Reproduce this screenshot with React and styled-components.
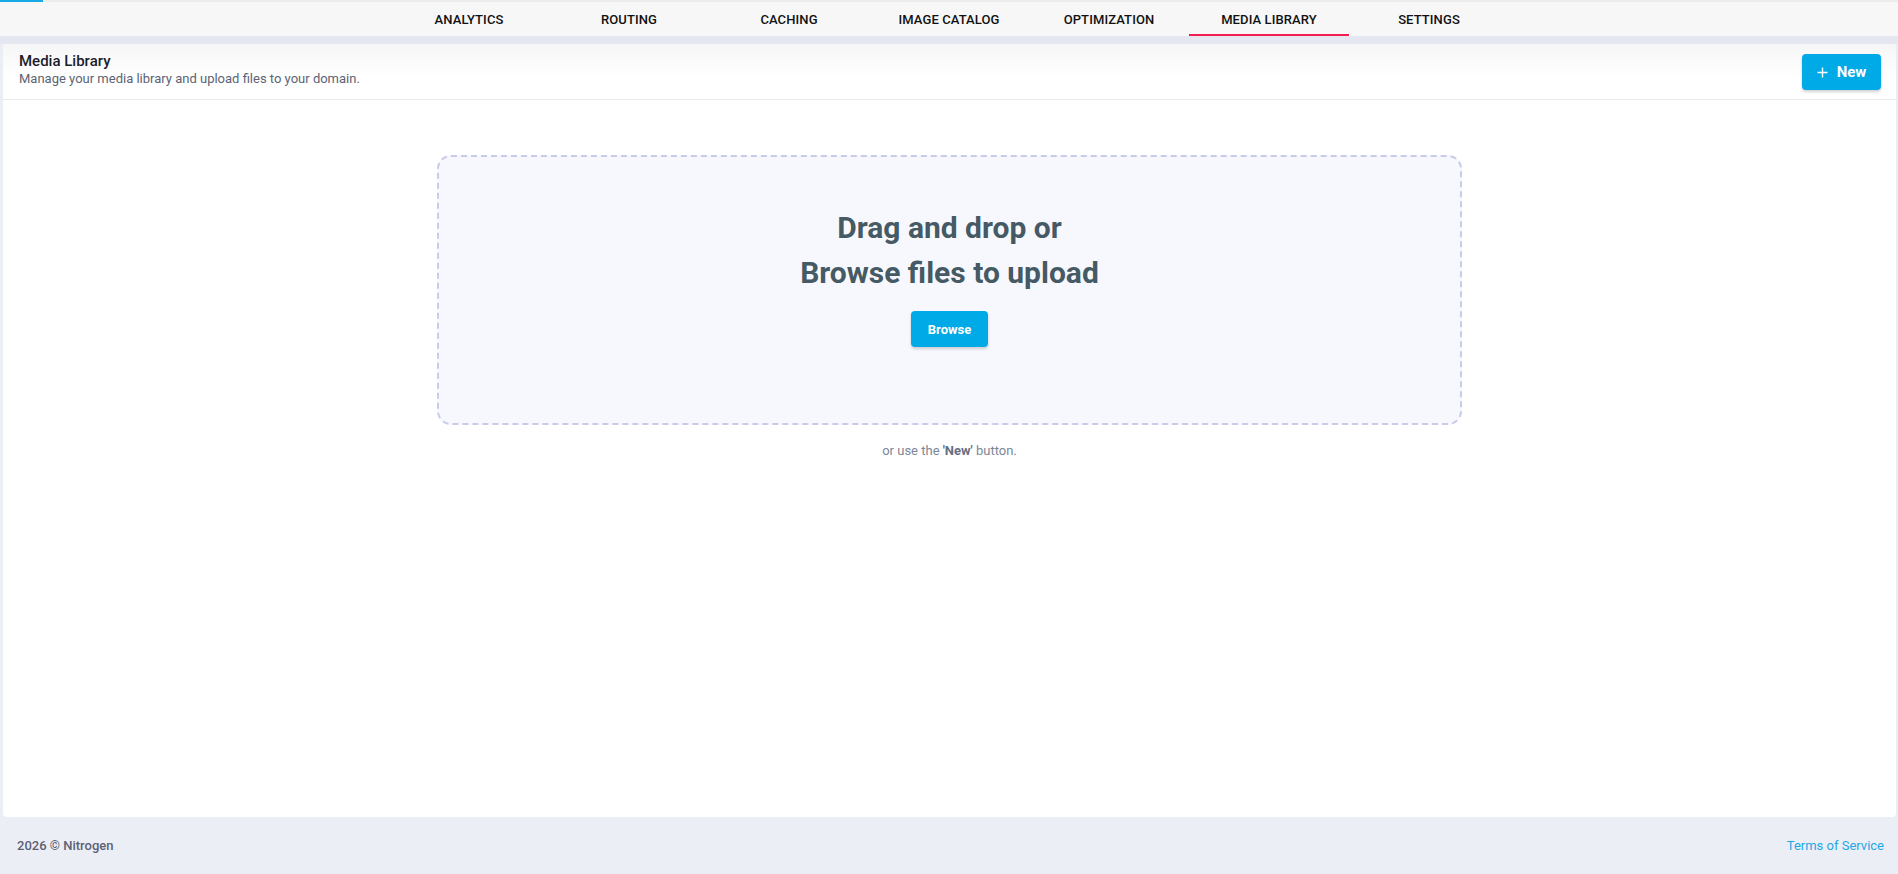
import React from "react";
import styled, { createGlobalStyle } from "styled-components";

const Global = createGlobalStyle`
  * { box-sizing: border-box; }
  html, body { margin: 0; padding: 0; }
  body {
    font-family: Roboto, "Liberation Sans", Arial, sans-serif;
    background: #eceef6;
    -webkit-font-smoothing: antialiased;
  }
`;

const Page = styled.div`
  position: relative;
  min-height: 100vh;
  display: flex;
  flex-direction: column;
`;

const Progress = styled.div`
  position: absolute;
  top: 0;
  left: 0;
  width: 43px;
  height: 2px;
  background: #17a9e6;
  z-index: 2;
`;

const Nav = styled.nav`
  height: 36px;
  background: #f7f7f7;
  border-top: 2px solid #ececec;
  display: flex;
  justify-content: center;
  box-shadow: 0 1px 0 #e3e5ee;
`;

const Tab = styled.a`
  width: 160px;
  display: flex;
  align-items: center;
  justify-content: center;
  font-size: 13px;
  font-weight: 500;
  color: #111;
  text-transform: uppercase;
  text-decoration: none;
  letter-spacing: 0.1px;
  border-bottom: 2px solid ${(p) => (p.$active ? "#f41d52" : "transparent")};
  padding-top: 2px;
  cursor: pointer;
`;

const Band = styled.div`
  height: 8px;
  background: #e5e7f0;
`;

const Card = styled.main`
  flex: 1;
  margin: 0 2px 0 3px;
  background: #fff;
  border-radius: 4px;
  display: flex;
  flex-direction: column;
`;

const CardHeader = styled.header`
  height: 56px;
  padding: 8px 16px 0 16px;
  display: flex;
  justify-content: space-between;
  align-items: flex-start;
  border-bottom: 1px solid #ebebeb;
  background: linear-gradient(#f6f6f7, #ffffff 60%);
  border-radius: 4px 4px 0 0;
`;

const Titles = styled.div`
  display: flex;
  flex-direction: column;
`;

const Title = styled.h1`
  margin: 0;
  font-size: 15px;
  line-height: 18px;
  font-weight: 500;
  color: #1b1d2b;
`;

const Subtitle = styled.p`
  margin: 1px 0 0;
  font-size: 13px;
  line-height: 16px;
  color: #5b6374;
`;

const PrimaryButton = styled.button`
  display: inline-flex;
  align-items: center;
  justify-content: center;
  gap: ${(p) => (p.$gap ? "9px" : "0")};
  height: 36px;
  padding: 0 17px;
  background: #00aae6;
  color: #fff;
  border: none;
  border-radius: 4px;
  font-family: Roboto, "Liberation Sans", Arial, sans-serif;
  font-size: ${(p) => p.$size || "14px"};
  font-weight: 700;
  box-shadow: 0 2px 3px rgba(0, 0, 0, 0.18);
  cursor: pointer;
`;

const NewButton = styled(PrimaryButton)`
  width: 79px;
  padding: 0;
  margin-top: 2px;
  margin-right: -1px;
`;

const Body = styled.section`
  display: flex;
  flex-direction: column;
  align-items: center;
  padding-top: 55px;
`;

const DropZone = styled.div`
  width: 1025px;
  height: 270px;
  border: 2px dashed #c9cbea;
  border-radius: 14px;
  background: #f7f8fd;
  display: flex;
  flex-direction: column;
  align-items: center;
  padding-top: 48px;
`;

const DropTitle = styled.h2`
  margin: 0 0 16px;
  font-size: 30px;
  line-height: 45px;
  font-weight: 700;
  color: #455a64;
  text-align: center;
`;

const Hint = styled.p`
  margin: 18px 0 0;
  font-size: 13px;
  color: #7b8799;
  strong { font-weight: 700; color: #66707f; }
`;

const Footer = styled.footer`
  height: 57px;
  padding: 0 14px 0 17px;
  display: flex;
  align-items: center;
  justify-content: space-between;
  font-size: 13px;
`;

const Copy = styled.span`
  color: #5c6174;
  font-weight: 500;
`;

const FooterLink = styled.a`
  color: #1ea8e6;
  text-decoration: none;
`;

const PlusIcon = () => (
  <svg width="11" height="11" viewBox="0 0 11 11" aria-hidden="true">
    <path d="M5.5 0.5v10M0.5 5.5h10" stroke="#fff" strokeWidth="1.4" fill="none" />
  </svg>
);

const tabs = ["Analytics", "Routing", "Caching", "Image Catalog", "Optimization", "Media Library", "Settings"];

export default function App() {
  return (
    <Page>
      <Global />
      <Progress />
      <Nav>
        {tabs.map((t) => (
          <Tab key={t} $active={t === "Media Library"}>{t}</Tab>
        ))}
      </Nav>
      <Band />
      <Card>
        <CardHeader>
          <Titles>
            <Title>Media Library</Title>
            <Subtitle>Manage your media library and upload files to your domain.</Subtitle>
          </Titles>
          <NewButton $gap $size="15px">
            <PlusIcon />
            New
          </NewButton>
        </CardHeader>
        <Body>
          <DropZone>
            <DropTitle>
              Drag and drop or
              <br />
              Browse files to upload
            </DropTitle>
            <PrimaryButton $size="13px">Browse</PrimaryButton>
          </DropZone>
          <Hint>
            or use the <strong>'New'</strong> button.
          </Hint>
        </Body>
      </Card>
      <Footer>
        <Copy>2026 © Nitrogen</Copy>
        <FooterLink>Terms of Service</FooterLink>
      </Footer>
    </Page>
  );
}
